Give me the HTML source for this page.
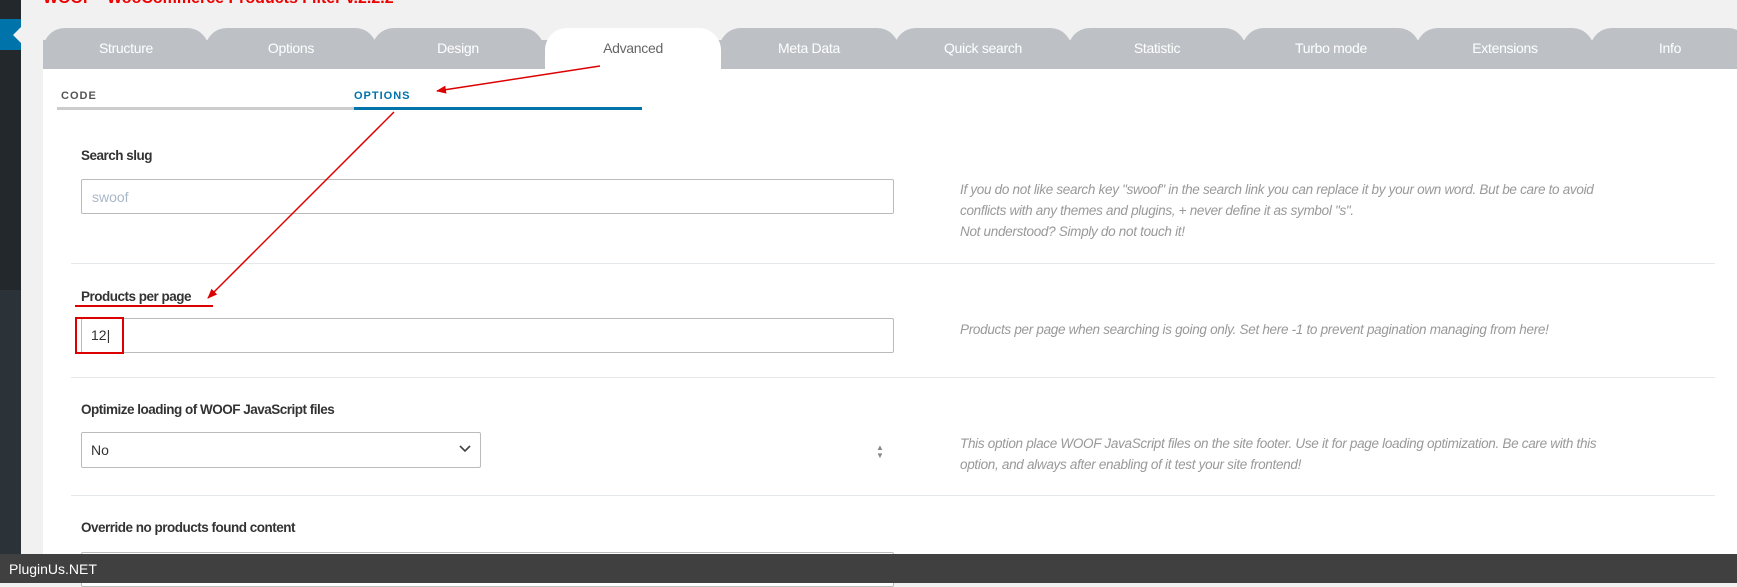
<!DOCTYPE html>
<html><head><meta charset="utf-8"><style>
*{margin:0;padding:0;box-sizing:border-box}
body{width:1737px;height:583px;overflow:hidden;background:#f1f1f1;font-family:"Liberation Sans",sans-serif;position:relative}
.abs{position:absolute}
.side{left:0;top:0;width:21px;height:290px;background:#23282d}
.side2{left:0;top:290px;width:21px;height:293px;background:#2c3338}
.blue{left:0;top:19px;width:21px;height:31px;background:#0073aa}
.tri{left:13px;top:27px;width:0;height:0;border-top:8px solid transparent;border-bottom:8px solid transparent;border-right:8px solid #f1f1f1}
.panel{left:43px;top:69px;width:1694px;height:514px;background:#fff}
.tab{top:28px;height:41px;background:#bdc1c6;border-radius:22px 22px 0 0;color:#fff;font-size:14px;text-align:center;line-height:40px;letter-spacing:-.3px}
.tab.act{background:#fff;color:#666}
.lbl{font-size:13.5px;font-weight:bold;color:#333;letter-spacing:-.5px}
.inp{border:1px solid #bbb;border-radius:2px;background:#fff}
.help{font-size:13.5px;font-style:italic;color:#999;line-height:21px;letter-spacing:-.3px}
.sep{left:71px;width:1644px;height:1px;background:#e6e9ec}
</style></head><body>
<div class="abs" style="left:43px;top:-10px;color:#e00;font-size:16px;font-weight:bold">WOOF - WooCommerce Products Filter v.2.2.2</div>
<div class="abs side"></div><div class="abs side2"></div><div class="abs blue"></div><div class="abs tri"></div>
<div class="abs panel"></div>
<div class="abs" style="left:43px;top:40px;width:1694px;height:29px;background:#bdc1c6"></div>
<div class="abs tab" style="left:43px;width:166px">Structure</div>
<div class="abs tab" style="left:205px;width:172px">Options</div>
<div class="abs tab" style="left:372px;width:172px">Design</div>
<div class="abs tab" style="left:719px;width:180px">Meta Data</div>
<div class="abs tab" style="left:894px;width:178px">Quick search</div>
<div class="abs tab" style="left:1068px;width:178px">Statistic</div>
<div class="abs tab" style="left:1242px;width:178px">Turbo mode</div>
<div class="abs tab" style="left:1416px;width:178px">Extensions</div>
<div class="abs tab" style="left:1590px;width:160px">Info</div>
<div class="abs tab act" style="left:545px;width:176px">Advanced</div>
<div class="abs" style="left:61px;top:90px;font-size:11px;font-weight:bold;color:#555;letter-spacing:1px">CODE</div>
<div class="abs" style="left:354px;top:90px;font-size:11px;font-weight:bold;color:#0073aa;letter-spacing:1px">OPTIONS</div>
<div class="abs" style="left:57px;top:107px;width:297px;height:3px;background:#ccc"></div>
<div class="abs" style="left:354px;top:107px;width:288px;height:3px;background:#0073aa"></div>

<div class="abs lbl" style="left:81px;top:148px">Search slug</div>
<div class="abs inp" style="left:81px;top:179px;width:813px;height:35px"></div>
<div class="abs" style="left:92px;top:189px;font-size:14px;color:#a9b8c8">swoof</div>
<div class="abs help" style="left:960px;top:179px">If you do not like search key "swoof" in the search link you can replace it by your own word. But be care to avoid<br>conflicts with any themes and plugins, + never define it as symbol "s".<br>Not understood? Simply do not touch it!</div>
<div class="abs sep" style="top:263px"></div>

<div class="abs lbl" style="left:81px;top:289px">Products per page</div>
<div class="abs" style="left:75px;top:305px;width:138px;height:2px;background:#d00"></div>
<div class="abs inp" style="left:81px;top:318px;width:813px;height:35px"></div>
<div class="abs" style="left:91px;top:327px;font-size:14px;color:#333">12|</div>
<div class="abs" style="left:75px;top:317px;width:49px;height:37px;border:2px solid #d00"></div>
<div class="abs help" style="left:960px;top:319px">Products per page when searching is going only. Set here -1 to prevent pagination managing from here!</div>
<div class="abs sep" style="top:377px"></div>

<div class="abs lbl" style="left:81px;top:402px">Optimize loading of WOOF JavaScript files</div>
<div class="abs inp" style="left:81px;top:432px;width:400px;height:36px"></div>
<div class="abs" style="left:91px;top:442px;font-size:14px;color:#333">No</div>
<svg class="abs" style="left:458px;top:444px" width="14" height="10"><path d="M2 2 L7 7 L12 2" fill="none" stroke="#444" stroke-width="1.6"/></svg>
<div class="abs" style="left:876px;top:444px;font-size:8px;color:#888;line-height:8px">▲<br>▼</div>
<div class="abs help" style="left:960px;top:433px">This option place WOOF JavaScript files on the site footer. Use it for page loading optimization. Be care with this<br>option, and always after enabling of it test your site frontend!</div>
<div class="abs sep" style="top:495px"></div>

<div class="abs lbl" style="left:81px;top:520px">Override no products found content</div>
<div class="abs inp" style="left:81px;top:552px;width:813px;height:35px"></div>

<svg class="abs" style="left:0;top:0" width="1737" height="583">
<defs><marker id="a" markerWidth="10" markerHeight="8" refX="9" refY="4" orient="auto" markerUnits="userSpaceOnUse"><path d="M0 0 L10 4 L0 8 Z" fill="#d00"/></marker></defs>
<line x1="600" y1="66" x2="437" y2="91" stroke="#d00" stroke-width="1.5" marker-end="url(#a)"/>
<line x1="394" y1="112" x2="208" y2="298" stroke="#d00" stroke-width="1.5" marker-end="url(#a)"/>
</svg>
<div class="abs" style="left:0;top:554px;width:1737px;height:29px;background:#404040"></div>
<div class="abs" style="left:9px;top:561px;font-size:14px;color:#fff">PluginUs.NET</div>
</body></html>
